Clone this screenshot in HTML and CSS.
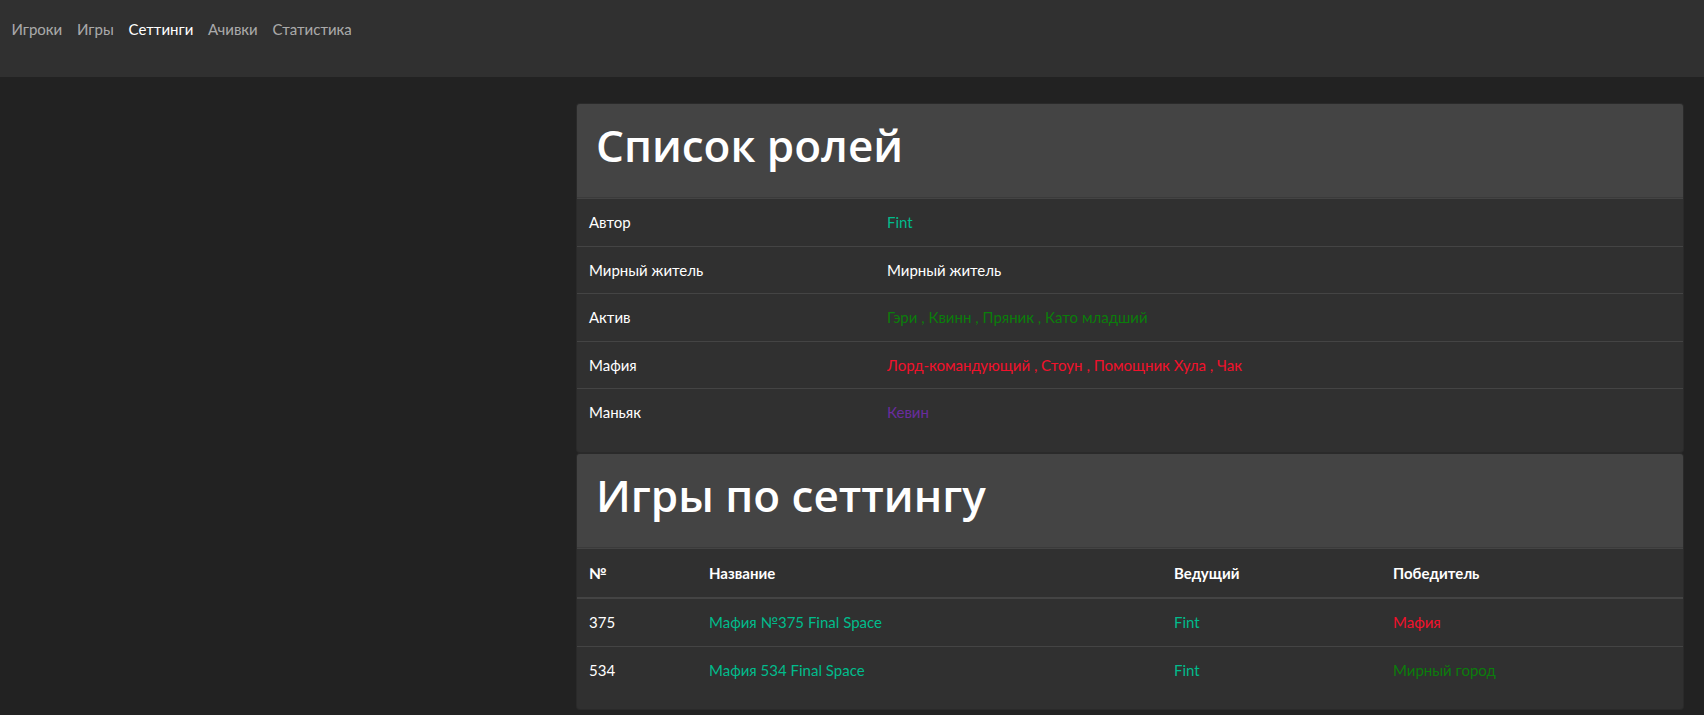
FILE: index.html
```html
<!DOCTYPE html>
<html lang="ru">
<head>
<meta charset="utf-8">
<title>Сеттинги</title>
<link rel="stylesheet" href="styles.css">
</head>
<body>
<nav class="navbar">
  <ul class="nav-list">
    <li><a class="nav-link" href="#">Игроки</a></li>
    <li><a class="nav-link" href="#">Игры</a></li>
    <li><a class="nav-link active" href="#">Сеттинги</a></li>
    <li><a class="nav-link" href="#">Ачивки</a></li>
    <li><a class="nav-link" href="#">Статистика</a></li>
  </ul>
</nav>
<div class="layout">
  <aside class="side"></aside>
  <main class="content">
    <section class="card">
      <div class="card-header"><h1>Список ролей</h1></div>
      <table class="table roles">
        <tbody>
          <tr><td class="c-label">Автор</td><td><a class="link-success" href="#">Fint</a></td></tr>
          <tr><td class="c-label">Мирный житель</td><td>Мирный житель</td></tr>
          <tr><td class="c-label">Актив</td><td class="t-green">Гэри , Квинн , Пряник , Като младший</td></tr>
          <tr><td class="c-label">Мафия</td><td class="t-red">Лорд-командующий , Стоун , Помощник Хула , Чак</td></tr>
          <tr><td class="c-label">Маньяк</td><td class="t-purple">Кевин</td></tr>
        </tbody>
      </table>
    </section>
    <section class="card">
      <div class="card-header"><h1>Игры по сеттингу</h1></div>
      <table class="table games">
        <thead>
          <tr><th class="g1">№</th><th class="g2">Название</th><th class="g3">Ведущий</th><th>Победитель</th></tr>
        </thead>
        <tbody>
          <tr><td>375</td><td><a class="link-success" href="#">Мафия №375 Final Space</a></td><td><a class="link-success" href="#">Fint</a></td><td class="t-red">Мафия</td></tr>
          <tr><td>534</td><td><a class="link-success" href="#">Мафия 534 Final Space</a></td><td><a class="link-success" href="#">Fint</a></td><td class="t-green">Мирный город</td></tr>
        </tbody>
      </table>
    </section>
  </main>
</div>
</body>
</html>
```

FILE: styles.css
```css
* { box-sizing: border-box; }
html, body {
  margin: 0;
  padding: 0;
  background: #222222;
  color: #ffffff;
  font-family: Lato, "Noto Sans", "Liberation Sans", sans-serif;
  font-size: 15px;
  line-height: 1.5;
}
a { text-decoration: none; }

.navbar {
  background: #303030;
  height: 77px;
  padding: 10px 4px 0 4px;
}
.nav-list {
  list-style: none;
  margin: 0;
  padding: 0;
  display: flex;
}
.nav-link {
  display: block;
  padding: 8px 7.4px;
  color: rgba(255, 255, 255, 0.6);
}
.nav-link.active { color: #ffffff; }

.layout {
  display: grid;
  grid-template-columns: 576px 1108px;
  margin-top: 26px;
}
.content { display: flex; flex-direction: column; }

.card {
  background: #303030;
  border: 1px solid rgba(0, 0, 0, 0.125);
  border-radius: 4px;
  overflow: hidden;
}
.card-header {
  background: #444444;
  padding: 14px 21px 17px 19px;
  border-bottom: 1px solid rgba(0, 0, 0, 0.125);
}
.card-header h1 {
  margin: 0 0 8px 0;
  font-family: "Open Sans", "Noto Sans", sans-serif;
  font-size: 44px;
  font-weight: 600;
  line-height: 54px;
}

.table {
  width: 100%;
  border-collapse: collapse;
  margin-bottom: 16px;
}
.table td, .table th {
  padding: 12px;
  border-top: 1px solid #444444;
  text-align: left;
  vertical-align: top;
}
.table th {
  font-weight: 700;
  padding-top: 13px;
  padding-bottom: 13px;
  border-bottom: 2px solid #444444;
}
.roles .c-label { width: 298px; }
.games .g1 { width: 120px; }
.games .g2 { width: 465px; }
.games .g3 { width: 219px; }

.link-success { color: #00bc8c; }
.t-green { color: #0b7d0b; }
.t-red { color: #f2112b; }
.t-purple { color: #6a2c9e; }
```
